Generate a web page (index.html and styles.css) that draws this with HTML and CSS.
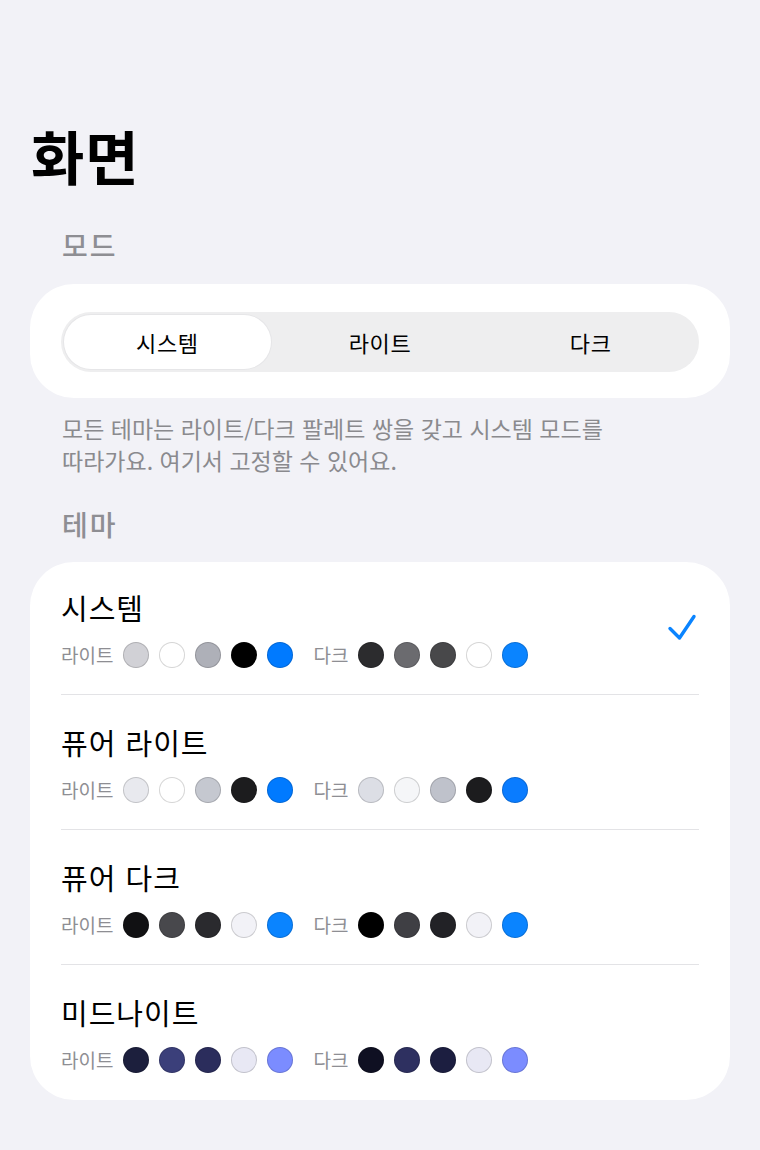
FILE: index.html
```html
<!DOCTYPE html>
<html lang="ko">
<head>
<meta charset="utf-8">
<link rel="stylesheet" href="styles.css">
</head>
<body>
<div class="page">
  <h1 class="title">화면</h1>

  <div class="section-label">모드</div>
  <div class="card mode-card">
    <div class="segmented">
      <div class="seg seg-active">시스템</div>
      <div class="seg">라이트</div>
      <div class="seg">다크</div>
    </div>
  </div>
  <p class="footnote">모든 테마는 라이트/다크 팔레트 쌍을 갖고 시스템 모드를<br>따라가요. 여기서 고정할 수 있어요.</p>

  <div class="section-label theme-label">테마</div>
  <div class="card theme-card">
    <div class="row row-first">
      <div class="row-main">
        <div class="row-title">시스템</div>
        <div class="palettes">
          <div class="palette">
            <span class="pal-label">라이트</span>
            <span class="sw" style="background:#d1d1d6"></span>
            <span class="sw" style="background:#ffffff"></span>
            <span class="sw" style="background:#aeb0b8"></span>
            <span class="sw" style="background:#000000"></span>
            <span class="sw" style="background:#007aff"></span>
          </div>
          <div class="palette">
            <span class="pal-label">다크</span>
            <span class="sw" style="background:#2c2c2e"></span>
            <span class="sw" style="background:#6b6b6f"></span>
            <span class="sw" style="background:#48484a"></span>
            <span class="sw" style="background:#ffffff"></span>
            <span class="sw" style="background:#0a84ff"></span>
          </div>
        </div>
      </div>
      <svg class="check" width="30" height="30" viewBox="0 0 30 30"><polyline points="3,16.5 12.5,26 27,4.5" fill="none" stroke="#0a84ff" stroke-width="3.4" stroke-linecap="round" stroke-linejoin="round"/></svg>
    </div>

    <div class="row">
      <div class="row-main">
        <div class="row-title">퓨어 라이트</div>
        <div class="palettes">
          <div class="palette">
            <span class="pal-label">라이트</span>
            <span class="sw" style="background:#e8e9ee"></span>
            <span class="sw" style="background:#ffffff"></span>
            <span class="sw" style="background:#c5c8d0"></span>
            <span class="sw" style="background:#1c1c1e"></span>
            <span class="sw" style="background:#007aff"></span>
          </div>
          <div class="palette">
            <span class="pal-label">다크</span>
            <span class="sw" style="background:#dcdee5"></span>
            <span class="sw" style="background:#f5f6f8"></span>
            <span class="sw" style="background:#bfc2cb"></span>
            <span class="sw" style="background:#1c1c1e"></span>
            <span class="sw" style="background:#0a7cff"></span>
          </div>
        </div>
      </div>
    </div>

    <div class="row">
      <div class="row-main">
        <div class="row-title">퓨어 다크</div>
        <div class="palettes">
          <div class="palette">
            <span class="pal-label">라이트</span>
            <span class="sw" style="background:#111113"></span>
            <span class="sw" style="background:#48484c"></span>
            <span class="sw" style="background:#2a2a2e"></span>
            <span class="sw" style="background:#f2f2f7"></span>
            <span class="sw" style="background:#0a84ff"></span>
          </div>
          <div class="palette">
            <span class="pal-label">다크</span>
            <span class="sw" style="background:#000000"></span>
            <span class="sw" style="background:#3f3f44"></span>
            <span class="sw" style="background:#222226"></span>
            <span class="sw" style="background:#f2f2f7"></span>
            <span class="sw" style="background:#0a84ff"></span>
          </div>
        </div>
      </div>
    </div>

    <div class="row row-last">
      <div class="row-main">
        <div class="row-title">미드나이트</div>
        <div class="palettes">
          <div class="palette">
            <span class="pal-label">라이트</span>
            <span class="sw" style="background:#1c1f3d"></span>
            <span class="sw" style="background:#3b3f7a"></span>
            <span class="sw" style="background:#2b2d5c"></span>
            <span class="sw" style="background:#e8e8f4"></span>
            <span class="sw" style="background:#7b8cff"></span>
          </div>
          <div class="palette">
            <span class="pal-label">다크</span>
            <span class="sw" style="background:#0f1022"></span>
            <span class="sw" style="background:#2e3060"></span>
            <span class="sw" style="background:#1c1e40"></span>
            <span class="sw" style="background:#e8e8f4"></span>
            <span class="sw" style="background:#7b8cff"></span>
          </div>
        </div>
      </div>
    </div>
  </div>
</div>
</body>
</html>
```

FILE: styles.css
```css
html, body {
  margin: 0;
  padding: 0;
  background: #f2f2f7;
}
body {
  font-family: "Noto Sans CJK KR", "Noto Sans", sans-serif;
  color: #000;
}
.page {
  padding: 121px 30px 0 30px;
}
.title {
  margin: 0;
  padding-left: 1px;
  font-size: 58px;
  line-height: 68px;
  font-weight: 700;
  letter-spacing: 1px;
}
.section-label {
  margin-top: 38px;
  padding-left: 32px;
  font-size: 28px;
  line-height: 36px;
  font-weight: 500;
  color: #8e8e93;
  letter-spacing: 2px;
}
.theme-label {
  margin-top: 30px;
}
.card {
  background: #fff;
  border-radius: 44px;
}
.mode-card {
  margin-top: 21px;
  padding: 28px 31px 26px 31px;
}
.segmented {
  display: grid;
  grid-template-columns: 1fr 1fr 1fr;
  background: #eeeeef;
  border-radius: 30px;
  padding: 3px;
  height: 54px;
}
.seg {
  display: flex;
  align-items: center;
  justify-content: center;
  font-size: 22px;
  letter-spacing: 0.6px;
  color: #000;
  border-radius: 27px;
}
.seg-active {
  background: #fff;
  margin: 0 4px 0 0;
  box-shadow: 0 0 0 1px #e6e6e8;
}
.footnote {
  margin: 14px 0 0 0;
  padding-left: 32px;
  font-size: 23px;
  line-height: 32px;
  color: #8a8a8e;
}
.theme-card {
  margin-top: 20px;
  padding: 0 31px;
}
.row {
  display: flex;
  align-items: center;
  padding: 28px 0 26px 0;
  border-bottom: 1px solid #e3e3e6;
}
.row-first {
  padding-top: 26px;
}
.row-last {
  border-bottom: none;
  padding-bottom: 27px;
}
.row-main {
  flex: 1;
  display: flex;
  flex-direction: column;
  gap: 16px;
}
.row-title {
  font-size: 29px;
  line-height: 38px;
  letter-spacing: 1px;
}
.palettes {
  display: flex;
  gap: 20px;
}
.palette {
  display: flex;
  align-items: center;
  gap: 10px;
}
.pal-label {
  font-size: 19px;
  line-height: 26px;
  color: #8e8e93;
}
.sw {
  width: 26px;
  height: 26px;
  border-radius: 50%;
  box-sizing: border-box;
  border: 1px solid rgba(0, 0, 0, 0.16);
}
.check {
  margin-right: 2px;
  margin-top: -2px;
}
```
